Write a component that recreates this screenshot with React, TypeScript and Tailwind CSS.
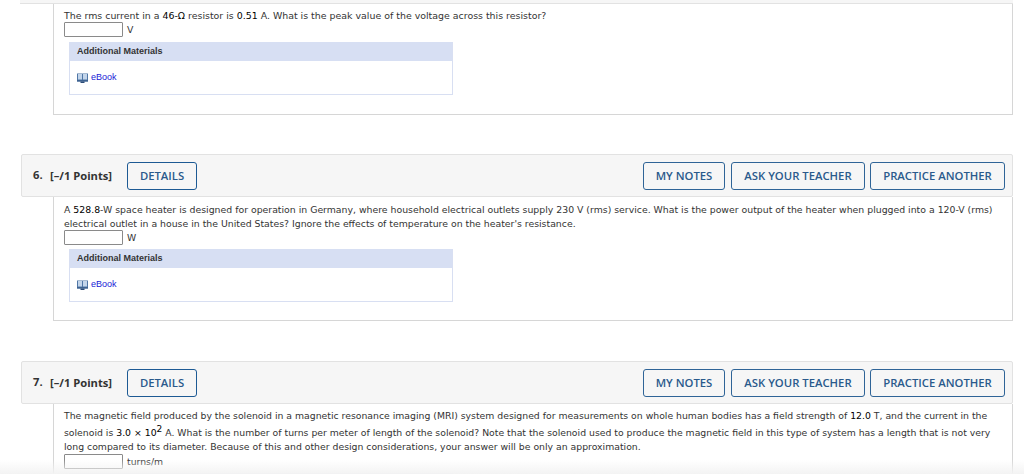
const verdana = "font-['DejaVu_Sans',sans-serif]"

function AnswerRow({ unit }: { unit: string }) {
  return (
    <div className="flex items-center h-[15px]">
      <div className="w-[59px] h-[15px] border border-[#8a8a8a] bg-white rounded-[1px]" />
      <span className="ml-[4px] text-[9.3px] text-[#333]">{unit}</span>
    </div>
  )
}

function Materials({ className }: { className: string }) {
  return (
    <div className={`ml-[5px] w-[384px] border border-[#d8dff2] border-t-0 font-['Liberation_Sans',sans-serif] ${className}`}>
      <div className="h-[19px] bg-[#d7dff3] pl-[7px] pt-[1px] flex items-center text-[9px] font-bold text-[#333]">
        Additional Materials
      </div>
      <div className="h-[33px] pl-[7px] flex items-center gap-[3px]">
        <BookIcon />
        <span className="text-[9px] text-[#1a1ad6]">eBook</span>
      </div>
    </div>
  )
}

function BookIcon() {
  return (
    <svg width="11" height="10" viewBox="0 0 11 10">
      <rect x="0" y="0.5" width="11" height="8" fill="#4f76a6" />
      <rect x="1" y="1" width="4" height="5.5" fill="#c3d5ea" />
      <rect x="6" y="1" width="4" height="5.5" fill="#c3d5ea" />
      <rect x="0" y="7" width="11" height="1.5" fill="#3e6290" />
      <rect x="3.5" y="8.5" width="4" height="1.5" fill="#2c4c78" />
    </svg>
  )
}

function ActionButton({ label, className }: { label: string; className: string }) {
  return (
    <button type="button" className={`h-[28px] border rounded-[3px] pt-[1px] text-[11.3px] text-[#2a5a8c] font-semibold flex items-center justify-center ${className}`}>
      {label}
    </button>
  )
}

function QuestionHeader({ num }: { num: string }) {
  return (
    <div className="ml-[21px] mr-[11px] h-[43px] bg-[#f6f6f6] border border-[#e2e2e2] rounded-[2px] flex items-center pl-[11px] pr-[7px] font-['Open_Sans',sans-serif]">
      <span className="text-[11.2px] font-bold text-[#333] w-[17px]">{num}</span>
      <span className="mt-[2px] text-[11.2px] font-bold text-[#333] w-[77px]">[–/1 Points]</span>
      <ActionButton label="DETAILS" className="w-[70px] border-[#1d5a94]" />
      <div className="ml-auto flex gap-[6px]">
        <ActionButton label="MY NOTES" className="w-[82px] border-[#2f6497]" />
        <ActionButton label="ASK YOUR TEACHER" className="w-[134px] border-[#2f6497]" />
        <ActionButton label="PRACTICE ANOTHER" className="w-[135px] -ml-[1px] border-[#2f6497]" />
      </div>
    </div>
  )
}

export default function App() {
  return (
    <div className={`relative h-[474px] w-[1024px] overflow-hidden bg-white ${verdana}`}>
      <div className="ml-[20px] mr-[11px] h-[4px] border-b border-[#e2e2e2] bg-[#f6f6f6]" />

      <div className="ml-[53px] mr-[11px] h-[111px] border-l border-b border-r border-[#d6d6d6] pl-[10px] pt-[6px] text-[9.42px] text-[#333]">
        <p className="leading-[12px]">
          The rms current in a <b className="font-normal text-black">46-Ω</b> resistor is <b className="font-normal text-black">0.51</b> A. What is the peak value of the voltage across this resistor?
        </p>
        <AnswerRow unit="V" />
        <Materials className="mt-[5px]" />
      </div>

      <div className="h-[39px]" />
      <QuestionHeader num="6." />
      <div className="ml-[53px] mr-[11px] h-[124px] border-l border-b border-r border-[#d6d6d6] pl-[10px] pt-[6px] text-[9.34px] text-[#333]">
        <p className="leading-[14px] -mb-[1px]">
          A <b className="font-normal text-black">528.8</b>-W space heater is designed for operation in Germany, where household electrical outlets supply 230 V (rms) service. What is the power output of the heater when plugged into a 120-V (rms) electrical outlet in a house in the United States? Ignore the effects of temperature on the heater's resistance.
        </p>
        <AnswerRow unit="W" />
        <Materials className="mt-[4px]" />
      </div>

      <div className="h-[40px]" />
      <QuestionHeader num="7." />
      <div className="ml-[53px] mr-[11px] h-[80px] border-l border-r border-[#d6d6d6] pl-[10px] pt-[5px] text-[9.3px] text-[#333]">
        <p className="leading-[14px]">
          The magnetic field produced by the solenoid in a magnetic resonance imaging (MRI) system designed for measurements on whole human bodies has a field strength of <b className="font-normal text-black">12.0</b> T, and the current in the solenoid is <b className="font-normal text-black">3.0 × 10<sup className="inline-block align-[3px] top-[-1px] leading-[14px] text-[9px]">2</sup></b> A. What is the number of turns per meter of length of the solenoid? Note that the solenoid used to produce the magnetic field in this type of system has a length that is not very long compared to its diameter. Because of this and other design considerations, your answer will be only an approximation.
        </p>
        <AnswerRow unit="turns/m" />
        <div className="ml-[5px] mt-[4px] w-[384px] h-[19px] bg-[#d7dff3]" />
      </div>
      <div className="absolute left-0 right-0 bottom-0 h-[14px] bg-gradient-to-b from-transparent to-[#f3f3f3]" />
    </div>
  )
}
